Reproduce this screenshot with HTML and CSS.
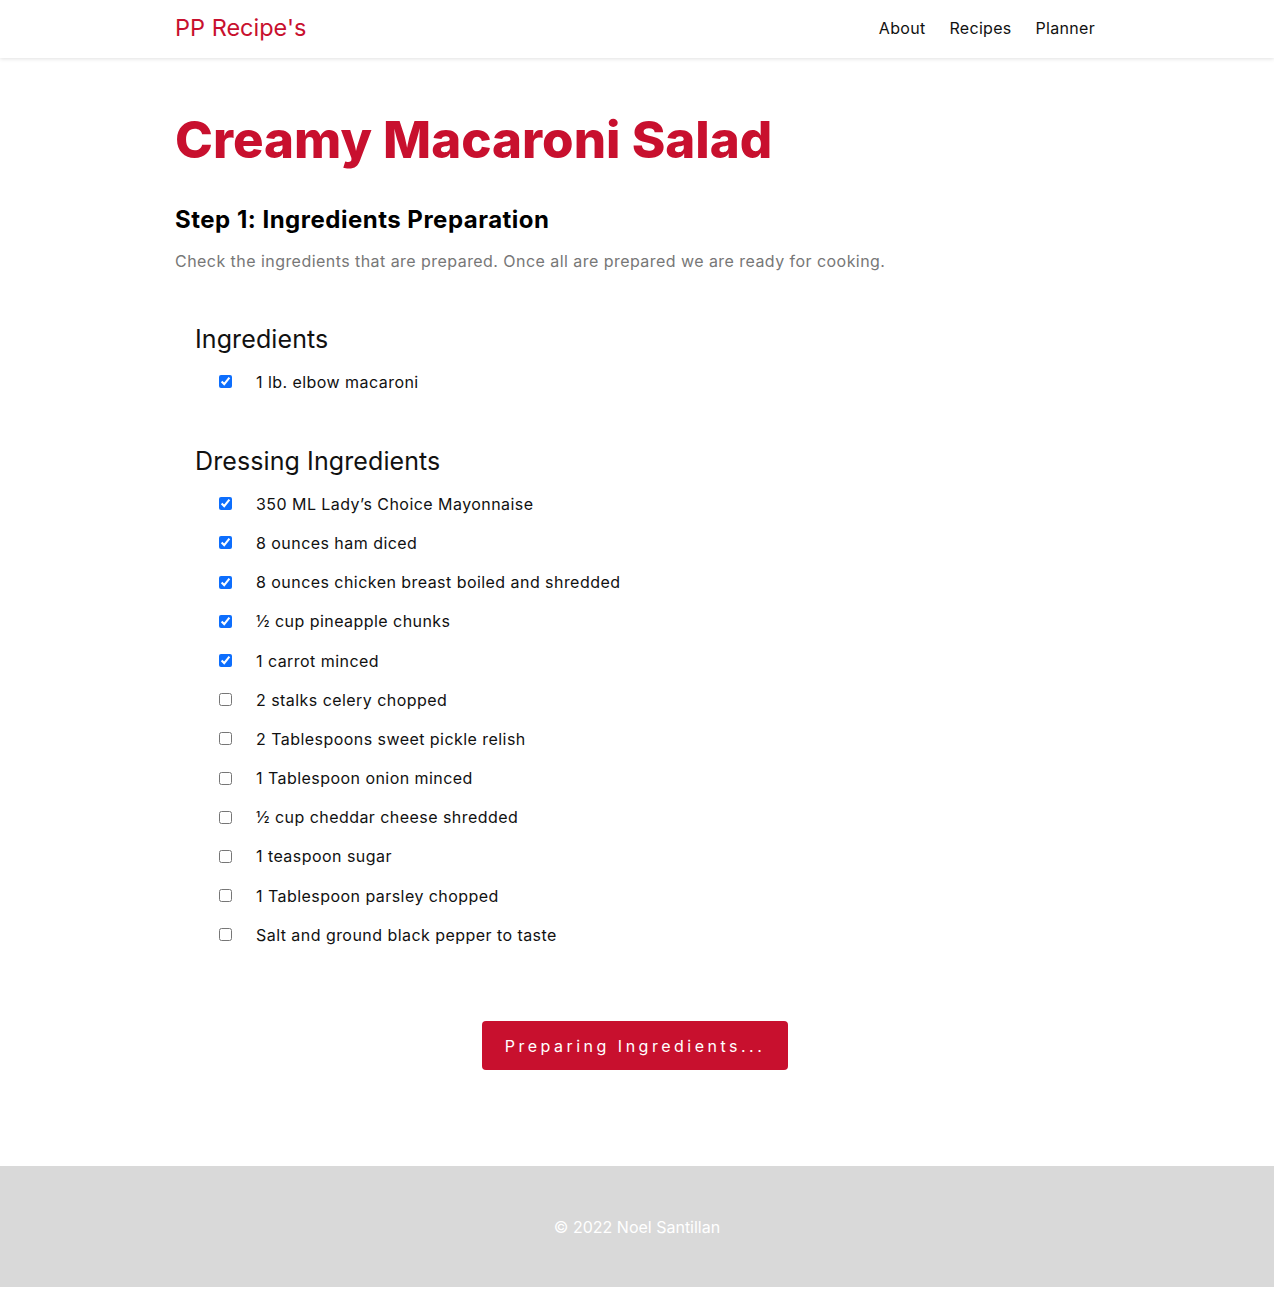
FILE: index.html
```html
<!DOCTYPE html>
<html>
<head>
<meta charset="utf-8">
<link rel="stylesheet" href="styles.css">
</head>
<body>
<header class="topbar">
  <div class="container nav-inner">
    <a class="brand" href="#">PP Recipe's</a>
    <nav class="nav">
      <a href="#">About</a>
      <a href="#">Recipes</a>
      <a href="#">Planner</a>
    </nav>
  </div>
</header>
<main class="container main">
  <h1 class="title">Creamy Macaroni Salad</h1>
  <h2 class="step">Step 1: Ingredients Preparation</h2>
  <p class="lead">Check the ingredients that are prepared. Once all are prepared we are ready for cooking.</p>

  <section class="group">
    <h3 class="group-title">Ingredients</h3>
    <ul class="list">
      <li><input type="checkbox" checked><span>1 lb. elbow macaroni</span></li>
    </ul>
  </section>

  <section class="group">
    <h3 class="group-title">Dressing Ingredients</h3>
    <ul class="list">
      <li><input type="checkbox" checked><span>350 ML Lady’s Choice Mayonnaise</span></li>
      <li><input type="checkbox" checked><span>8 ounces ham diced</span></li>
      <li><input type="checkbox" checked><span>8 ounces chicken breast boiled and shredded</span></li>
      <li><input type="checkbox" checked><span>½ cup pineapple chunks</span></li>
      <li><input type="checkbox" checked><span>1 carrot minced</span></li>
      <li><input type="checkbox"><span>2 stalks celery chopped</span></li>
      <li><input type="checkbox"><span>2 Tablespoons sweet pickle relish</span></li>
      <li><input type="checkbox"><span>1 Tablespoon onion minced</span></li>
      <li><input type="checkbox"><span>½ cup cheddar cheese shredded</span></li>
      <li><input type="checkbox"><span>1 teaspoon sugar</span></li>
      <li><input type="checkbox"><span>1 Tablespoon parsley chopped</span></li>
      <li><input type="checkbox"><span>Salt and ground black pepper to taste</span></li>
    </ul>
  </section>

  <div class="actions">
    <button class="btn">Preparing Ingredients...</button>
  </div>
</main>
<footer class="footer">
  <p>© 2022 Noel Santillan</p>
</footer>
</body>
</html>
```
FILE: styles.css
```css
* { box-sizing: border-box; }
html, body { margin: 0; padding: 0; }
body {
  font-family: Inter, "Noto Sans", sans-serif;
  color: #111;
  background: #fff;
  padding-bottom: 3px;
}
.container {
  width: 920px;
  margin-left: 175px;
}
.topbar {
  height: 58px;
  background: #fff;
  box-shadow: 0 1px 4px rgba(0,0,0,0.12);
}
.nav-inner {
  height: 58px;
  padding-bottom: 2px;
  display: flex;
  align-items: center;
  justify-content: space-between;
}
.brand {
  color: #c8102e;
  text-decoration: none;
  font-size: 23.5px;
  font-weight: 400;
  margin-bottom: 2px;
}
.nav {
  display: flex;
  gap: 24px;
}
.nav a {
  color: #111;
  text-decoration: none;
  font-size: 16px;
  letter-spacing: 0.3px;
}
.main {
  padding-top: 50px;
}
.title {
  margin: 0;
  font-size: 51px;
  line-height: 64px;
  font-weight: 800;
  color: #c8102e;
}
.step {
  margin: 32px 0 0;
  font-size: 24px;
  line-height: 32px;
  font-weight: 700;
  letter-spacing: 0.5px;
  color: #000;
}
.lead {
  margin: 13px 0 0;
  font-size: 16px;
  line-height: 24px;
  letter-spacing: 0.45px;
  color: #777;
}
.group {
  margin-left: 20px;
}
.group-title {
  margin: 0;
  font-size: 25px;
  line-height: 32px;
  font-weight: 400;
  color: #111;
  letter-spacing: 0.1px;
}
.group:first-of-type { margin-top: 50px; }
.group + .group { margin-top: 44px; }
.list {
  list-style: none;
  margin: 7px 0 0;
  padding: 0 0 0 24px;
}
.list li {
  display: flex;
  align-items: center;
  height: 39.2px;
  font-size: 16px;
  letter-spacing: 0.45px;
}
.list input {
  width: 13px;
  height: 13px;
  margin: 0 24px 0 0;
  accent-color: #0d6efd;
}
.actions {
  display: flex;
  justify-content: center;
  padding: 67px 0 96px;
}
.btn {
  font-family: inherit;
  background: #c8102e;
  color: #fff;
  border: none;
  border-radius: 4px;
  width: 306px;
  height: 49px;
  font-size: 16px;
  letter-spacing: 3.5px;
}
.footer {
  background: #d9d9d9;
  height: 121px;
  display: flex;
  align-items: center;
  justify-content: center;
}
.footer p {
  margin: 0;
  color: #fff;
  font-size: 16px;
}
```
